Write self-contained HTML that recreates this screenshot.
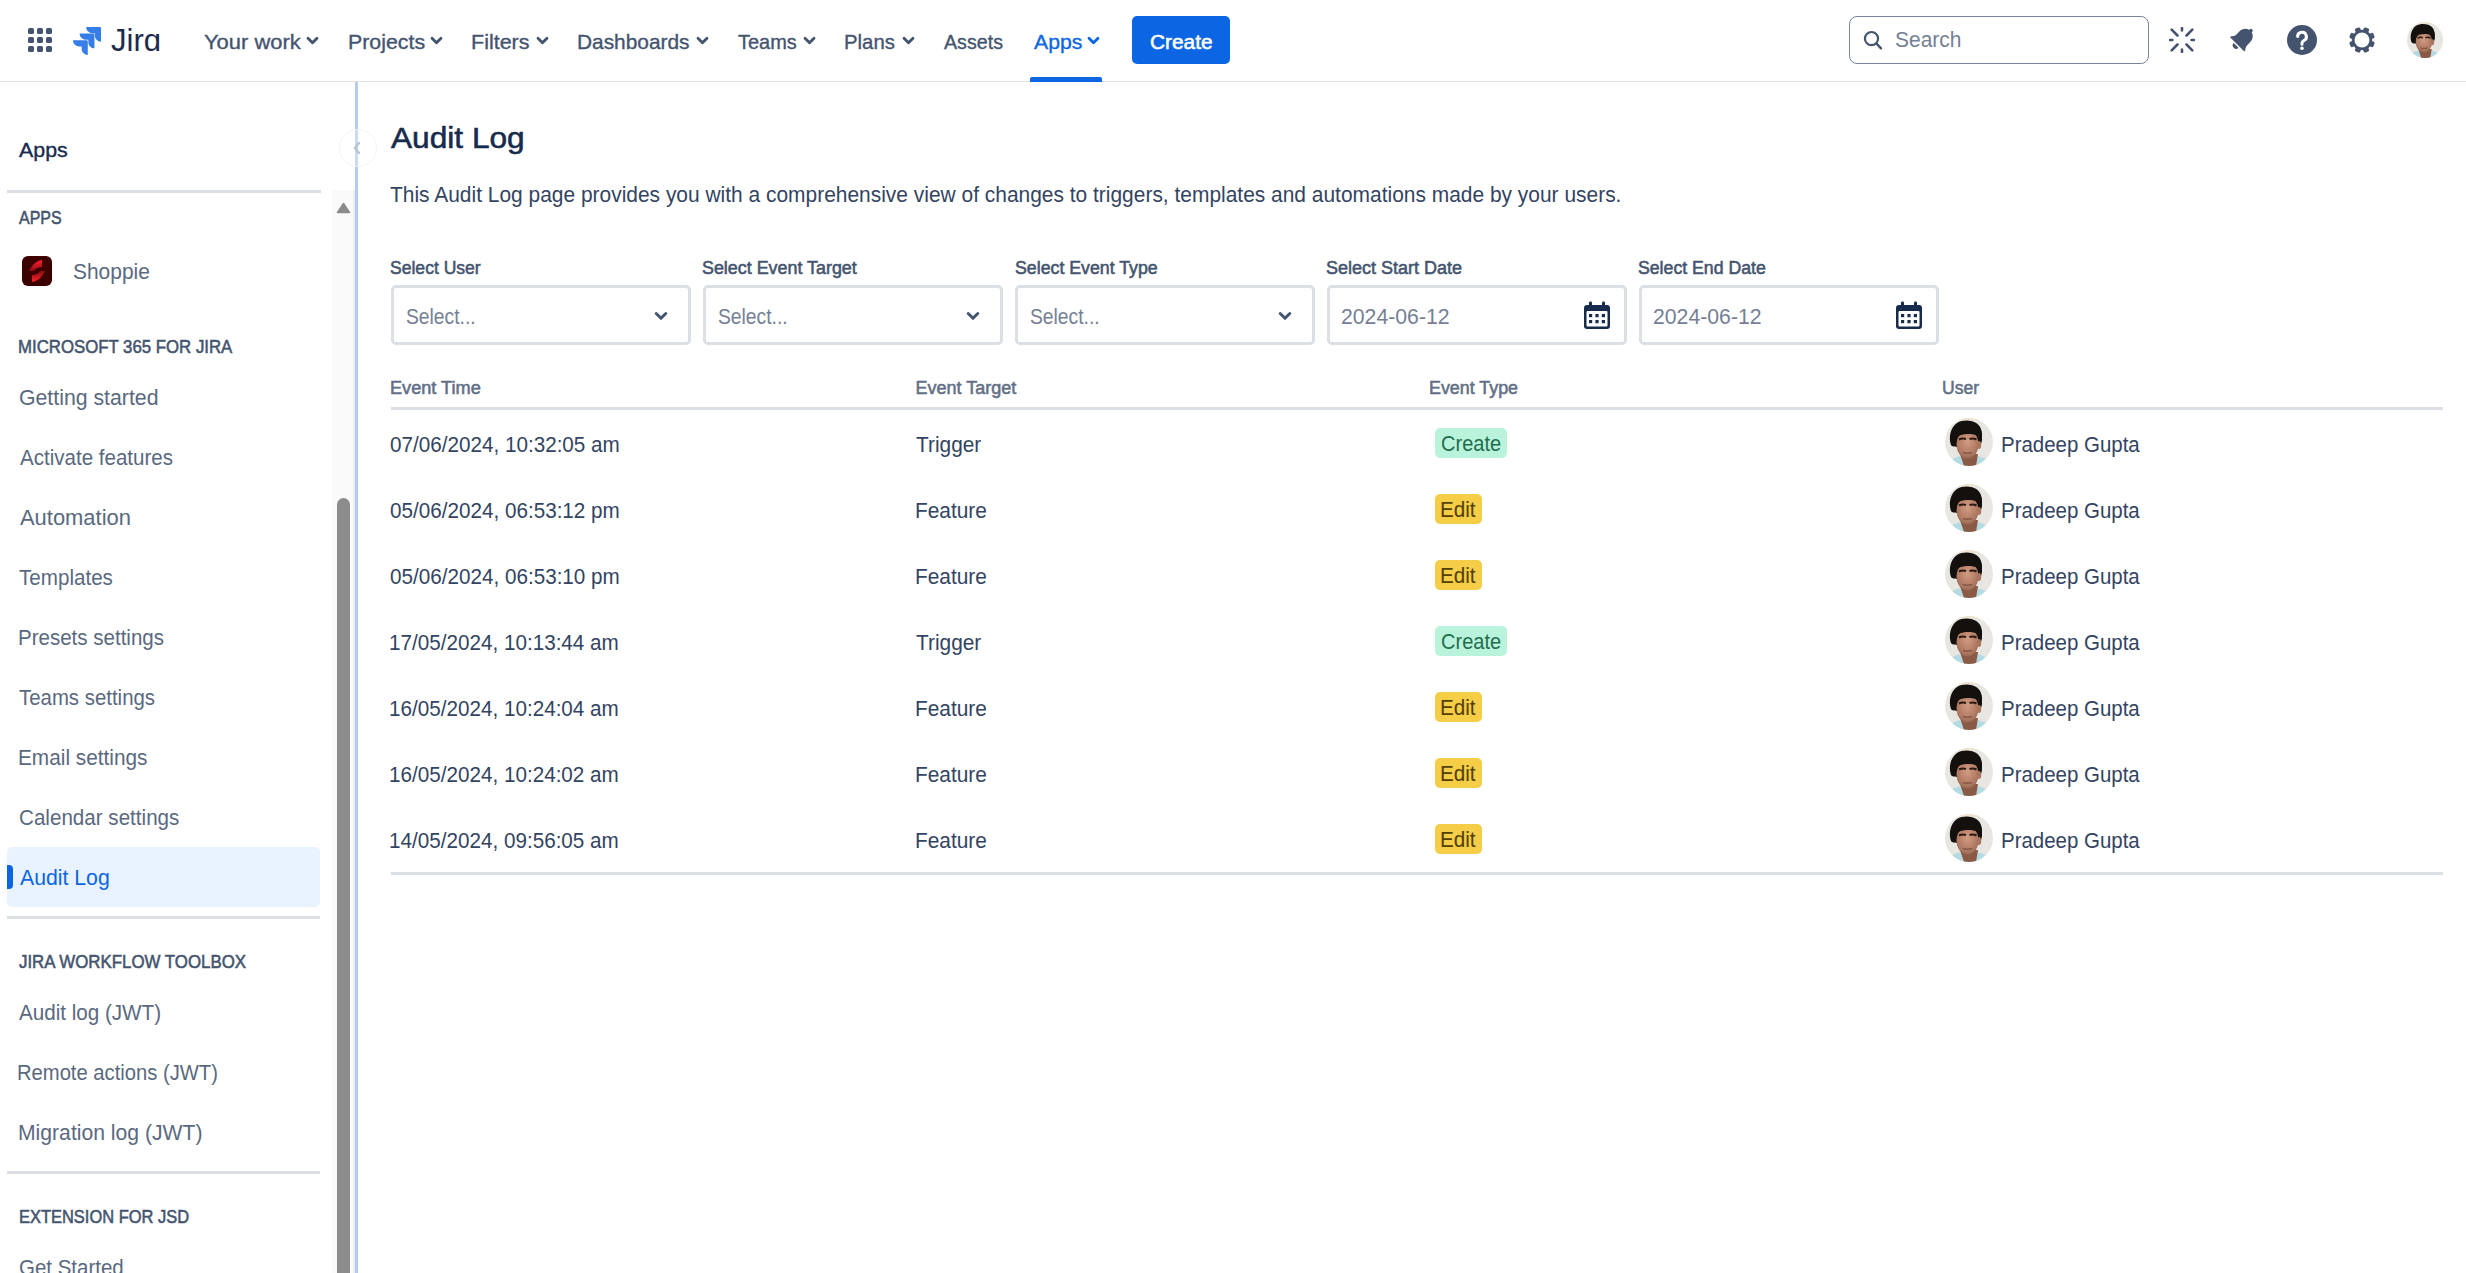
<!DOCTYPE html>
<html><head><meta charset="utf-8"><title>Audit Log</title><style>
*{box-sizing:border-box;margin:0;padding:0}
html,body{width:2466px;height:1273px;overflow:hidden;background:#fff;font-family:"Liberation Sans",sans-serif}
.abs{position:absolute;display:block}
.t{position:absolute;white-space:pre;transform-origin:0 0;font-family:"Liberation Sans",sans-serif}
.hr{position:absolute;background:#dcdfe4}
.sel{position:absolute;top:285px;width:300px;height:60px;border:3px solid #dcdfe4;border-radius:5px;background:#fff}
.badge{position:absolute;border-radius:5px}
</style></head><body>
<div class="abs" style="left:0;top:81px;width:2466px;height:1px;background:#dcdfe4"></div>
<div class="abs" style="left:28px;top:28px;width:6px;height:6px;border-radius:1.6px;background:#44546f"></div>
<div class="abs" style="left:37px;top:28px;width:6px;height:6px;border-radius:1.6px;background:#44546f"></div>
<div class="abs" style="left:46px;top:28px;width:6px;height:6px;border-radius:1.6px;background:#44546f"></div>
<div class="abs" style="left:28px;top:37px;width:6px;height:6px;border-radius:1.6px;background:#44546f"></div>
<div class="abs" style="left:37px;top:37px;width:6px;height:6px;border-radius:1.6px;background:#44546f"></div>
<div class="abs" style="left:46px;top:37px;width:6px;height:6px;border-radius:1.6px;background:#44546f"></div>
<div class="abs" style="left:28px;top:46px;width:6px;height:6px;border-radius:1.6px;background:#44546f"></div>
<div class="abs" style="left:37px;top:46px;width:6px;height:6px;border-radius:1.6px;background:#44546f"></div>
<div class="abs" style="left:46px;top:46px;width:6px;height:6px;border-radius:1.6px;background:#44546f"></div>
<svg class="abs" style="left:73px;top:27px" width="28" height="28" viewBox="2.1 3 26.5 26.4">
<path fill="#357de8" d="M27.3 3H14.6c0 3.2 2.6 5.8 5.8 5.8h2.4v2.3c0 3.2 2.6 5.8 5.8 5.8V4.1c0-.6-.5-1.1-1.3-1.1z"/>
<path fill="#357de8" d="M21.1 9.2H8.4c0 3.2 2.6 5.8 5.8 5.8h2.4v2.3c0 3.2 2.6 5.8 5.8 5.8V10.3c0-.6-.5-1.1-1.3-1.1z"/>
<path fill="#357de8" d="M14.8 15.5H2.1c0 3.2 2.6 5.8 5.8 5.8h2.4v2.3c0 3.2 2.6 5.8 5.8 5.8V16.6c0-.6-.5-1.1-1.3-1.1z"/>
</svg>
<span class="t" style="left:111px;top:24px;font-size:32px;line-height:32px;color:#1d2b4c;transform:scaleX(0.97)">Jir&#593;</span>
<svg class="abs" style="left:305.5px;top:36px" width="13" height="10" viewBox="0 0 13 10"><path d="M2 2.2 L6.5 6.8 L11 2.2" stroke="#44546f" stroke-width="2.8" fill="none" stroke-linecap="round" stroke-linejoin="round"/></svg>
<svg class="abs" style="left:430.0px;top:36px" width="13" height="10" viewBox="0 0 13 10"><path d="M2 2.2 L6.5 6.8 L11 2.2" stroke="#44546f" stroke-width="2.8" fill="none" stroke-linecap="round" stroke-linejoin="round"/></svg>
<svg class="abs" style="left:535.6px;top:36px" width="13" height="10" viewBox="0 0 13 10"><path d="M2 2.2 L6.5 6.8 L11 2.2" stroke="#44546f" stroke-width="2.8" fill="none" stroke-linecap="round" stroke-linejoin="round"/></svg>
<svg class="abs" style="left:696.0px;top:36px" width="13" height="10" viewBox="0 0 13 10"><path d="M2 2.2 L6.5 6.8 L11 2.2" stroke="#44546f" stroke-width="2.8" fill="none" stroke-linecap="round" stroke-linejoin="round"/></svg>
<svg class="abs" style="left:803.0px;top:36px" width="13" height="10" viewBox="0 0 13 10"><path d="M2 2.2 L6.5 6.8 L11 2.2" stroke="#44546f" stroke-width="2.8" fill="none" stroke-linecap="round" stroke-linejoin="round"/></svg>
<svg class="abs" style="left:902.0px;top:36px" width="13" height="10" viewBox="0 0 13 10"><path d="M2 2.2 L6.5 6.8 L11 2.2" stroke="#44546f" stroke-width="2.8" fill="none" stroke-linecap="round" stroke-linejoin="round"/></svg>
<svg class="abs" style="left:1087.0px;top:36px" width="13" height="10" viewBox="0 0 13 10"><path d="M2 2.2 L6.5 6.8 L11 2.2" stroke="#0c66e4" stroke-width="2.8" fill="none" stroke-linecap="round" stroke-linejoin="round"/></svg>
<div class="abs" style="left:1030px;top:77px;width:72px;height:5px;background:#0c66e4;border-radius:2px 2px 0 0"></div>
<div class="abs" style="left:1132px;top:16px;width:98px;height:48px;background:#0c66e4;border-radius:5px"></div>
<div class="abs" style="left:1849px;top:16px;width:300px;height:48px;border:1.5px solid #7a8599;border-radius:8px"></div>
<svg class="abs" style="left:1860px;top:28px" width="26" height="26" viewBox="0 0 26 26"><circle cx="11.5" cy="10.6" r="6.6" stroke="#44546f" stroke-width="2.2" fill="none"/><path d="M16.3 15.4 L21 20.3" stroke="#44546f" stroke-width="2.4" stroke-linecap="round"/></svg>
<svg class="abs" style="left:2169px;top:27px" width="26" height="26" viewBox="0 0 26 26"><path d="M22.60 13.00L25.00 13.00 M17.53 17.53L23.32 23.32 M13.00 22.60L13.00 25.00 M8.47 17.53L2.68 23.32 M3.40 13.00L1.00 13.00 M8.47 8.47L2.68 2.68 M13.00 3.40L13.00 1.00 M17.53 8.47L23.32 2.68" stroke="#44546f" stroke-width="2.6" stroke-linecap="round"/></svg>
<svg class="abs" style="left:2220px;top:20px" width="40" height="40" viewBox="0 0 40 40"><g transform="translate(17.2 24.4) rotate(45) translate(-14 -21.2)">
<path d="M14 2.4C9 2.4 6.4 6.3 6.4 10.6V15C6.4 16.9 5 18.9 3.9 19.9V21.2H24.1V19.9C23 18.9 21.6 16.9 21.6 15V10.6C21.6 6.3 19 2.4 14 2.4Z" fill="#44546f"/>
<circle cx="14" cy="1.9" r="1.9" fill="#44546f"/>
<path d="M10.6 22.7a3.4 3.4 0 0 0 6.8 0Z" fill="#44546f"/></g></svg>
<svg class="abs" style="left:2287px;top:25px" width="30" height="30" viewBox="0 0 30 30"><circle cx="15" cy="15" r="15" fill="#44546f"/>
<path d="M10.6 11.6a4.4 4.4 0 1 1 6.2 4c-1.2.6-1.8 1.3-1.8 2.6v1" stroke="#fff" stroke-width="3" fill="none" stroke-linecap="round"/>
<circle cx="15" cy="23.3" r="1.8" fill="#fff"/></svg>
<svg class="abs" style="left:2348.5px;top:26.5px" width="26" height="26" viewBox="0 0 26 26"><g fill="#44546f"><circle cx="13" cy="13" r="10.2"/><rect x="10.2" y="0.1" width="5.6" height="8" rx="1.4" transform="rotate(22.5 13 13)"/><rect x="10.2" y="0.1" width="5.6" height="8" rx="1.4" transform="rotate(67.5 13 13)"/><rect x="10.2" y="0.1" width="5.6" height="8" rx="1.4" transform="rotate(112.5 13 13)"/><rect x="10.2" y="0.1" width="5.6" height="8" rx="1.4" transform="rotate(157.5 13 13)"/><rect x="10.2" y="0.1" width="5.6" height="8" rx="1.4" transform="rotate(202.5 13 13)"/><rect x="10.2" y="0.1" width="5.6" height="8" rx="1.4" transform="rotate(247.5 13 13)"/><rect x="10.2" y="0.1" width="5.6" height="8" rx="1.4" transform="rotate(292.5 13 13)"/><rect x="10.2" y="0.1" width="5.6" height="8" rx="1.4" transform="rotate(337.5 13 13)"/></g><circle cx="13" cy="13" r="7.5" fill="#fff"/></svg>
<svg class="abs" style="left:2407px;top:22px" width="36" height="36" viewBox="0 0 48 48">
<defs><clipPath id="ac2407_22"><circle cx="24" cy="24" r="24"/></clipPath>
<radialGradient id="fac2407_22" cx="0.5" cy="0.4" r="0.65"><stop offset="0" stop-color="#cf9c82"/><stop offset="0.7" stop-color="#b17a62"/><stop offset="1" stop-color="#8f6350"/></radialGradient></defs>
<g clip-path="url(#ac2407_22)">
<rect width="48" height="48" fill="#e7e6e1"/>
<rect x="10" y="0" width="26" height="2.5" fill="#ece5cf"/>
<path d="M2 48 C4 42 10 39 16 38 L32 38 C38 39 44 42 46 48Z" fill="#b4dbe3"/>
<path d="M15 36 L19 48 L31 48 L33 36Z" fill="#8a5a45"/>
<path d="M7 24 C6 12 13 4 23 4 C32 4 37.5 10 37 20 C36.8 24 36 27 35 29 L11 29Z" fill="#14100e"/>
<ellipse cx="22.5" cy="26.5" rx="11" ry="14" fill="url(#fac2407_22)"/>
<ellipse cx="34" cy="27" rx="2.2" ry="4" fill="#a87560"/>
<path d="M6 27 C3.5 20 5 10 12 5 C18 1.5 27 2 32 5.5 C36.5 9 38 15 36.5 24 C35 21 33.5 18.5 31 17 C27 15.5 20 15.5 15.5 17 C12.5 18.5 11 22 11 28 C9 29 7 28.5 6 27Z" fill="#14100e"/>
<path d="M14 21.5 q3.5 -1.8 7 -0.5 M24.5 21 q3.5 -1.3 7 0.5" stroke="#2a1a12" stroke-width="2" fill="none"/>
<path d="M18 34.5 q4.5 1.5 9 0" stroke="#85574a" stroke-width="1.6" fill="none"/>
</g></svg>
<div class="hr" style="left:7px;top:190px;width:314px;height:3px"></div>
<div class="hr" style="left:7px;top:916px;width:313px;height:3px"></div>
<div class="hr" style="left:7px;top:1171px;width:313px;height:3px"></div>
<div class="abs" style="left:332px;top:190px;width:23px;height:1083px;background:#fafafa"></div>
<div class="abs" style="left:353px;top:190px;width:2px;height:1083px;background:#ececec"></div>
<svg class="abs" style="left:336px;top:202px" width="15" height="12" viewBox="0 0 15 12"><path d="M7.5 1.5 L13.5 10.5 H1.5Z" fill="#8b8b8b" stroke="#8b8b8b" stroke-width="1.5" stroke-linejoin="round"/></svg>
<div class="abs" style="left:337px;top:498px;width:13px;height:790px;background:#8c8c8c;border-radius:6.5px"></div>
<div class="abs" style="left:355px;top:82px;width:3px;height:1191px;background:#b6c9ee"></div>
<div class="abs" style="left:339px;top:129px;width:38px;height:38px;border-radius:50%;border:1px solid #f3f4f6;background:rgba(255,255,255,0.3)"></div>
<svg class="abs" style="left:351px;top:140px" width="12" height="16" viewBox="0 0 12 16"><path d="M8 3 L4 8 L8 13" stroke="#b9c3d3" stroke-width="2.4" fill="none" stroke-linecap="round"/></svg>
<svg class="abs" style="left:22px;top:256px" width="30" height="30" viewBox="0 0 30 30">
<defs><linearGradient id="sg1" x1="0" y1="0" x2="0" y2="1"><stop offset="0" stop-color="#ff2330"/><stop offset="1" stop-color="#8a0a10"/></linearGradient>
<linearGradient id="sg2" x1="0" y1="1" x2="0" y2="0"><stop offset="0" stop-color="#ff2330"/><stop offset="1" stop-color="#8a0a10"/></linearGradient></defs>
<rect x="0" y="0" width="30" height="30" rx="6" fill="#3d0000"/>
<path d="M20 4 C14 5 10 9 7 15 L12 15 C14 12 17 11 20 11Z" fill="url(#sg1)"/>
<path d="M10 26 C16 25 20 21 23 15 L18 15 C16 18 13 19 10 19Z" fill="url(#sg2)"/>
</svg>
<div class="abs" style="left:7px;top:847px;width:313px;height:60px;background:#e9f2ff;border-radius:5px"></div>
<div class="abs" style="left:7px;top:865px;width:6px;height:24px;background:#0c66e4;border-radius:0 4px 4px 0"></div>
<div class="sel" style="left:391px"></div>
<svg class="abs" style="left:654px;top:311px" width="14" height="11" viewBox="0 0 14 11"><path d="M2.2 2.5 L7 7.3 L11.8 2.5" stroke="#44546f" stroke-width="3" fill="none" stroke-linecap="round" stroke-linejoin="round"/></svg>
<div class="sel" style="left:703px"></div>
<svg class="abs" style="left:966px;top:311px" width="14" height="11" viewBox="0 0 14 11"><path d="M2.2 2.5 L7 7.3 L11.8 2.5" stroke="#44546f" stroke-width="3" fill="none" stroke-linecap="round" stroke-linejoin="round"/></svg>
<div class="sel" style="left:1015px"></div>
<svg class="abs" style="left:1278px;top:311px" width="14" height="11" viewBox="0 0 14 11"><path d="M2.2 2.5 L7 7.3 L11.8 2.5" stroke="#44546f" stroke-width="3" fill="none" stroke-linecap="round" stroke-linejoin="round"/></svg>
<div class="sel" style="left:1327px"></div>
<svg class="abs" style="left:1583px;top:301px" width="28" height="29" viewBox="0 0 28 29">
<rect x="1" y="4" width="26" height="24" rx="3" fill="#172b4d"/>
<rect x="3.5" y="10" width="21" height="15.5" rx="1" fill="#fff"/>
<rect x="6" y="0.5" width="3" height="6" rx="1.2" fill="#172b4d"/><rect x="19" y="0.5" width="3" height="6" rx="1.2" fill="#172b4d"/>
<g fill="#172b4d"><rect x="6" y="13" width="3.2" height="3.2"/><rect x="12.4" y="13" width="3.2" height="3.2"/><rect x="18.8" y="13" width="3.2" height="3.2"/>
<rect x="6" y="19" width="3.2" height="3.2"/><rect x="12.4" y="19" width="3.2" height="3.2"/><rect x="18.8" y="19" width="3.2" height="3.2"/></g>
</svg>
<div class="sel" style="left:1639px"></div>
<svg class="abs" style="left:1895px;top:301px" width="28" height="29" viewBox="0 0 28 29">
<rect x="1" y="4" width="26" height="24" rx="3" fill="#172b4d"/>
<rect x="3.5" y="10" width="21" height="15.5" rx="1" fill="#fff"/>
<rect x="6" y="0.5" width="3" height="6" rx="1.2" fill="#172b4d"/><rect x="19" y="0.5" width="3" height="6" rx="1.2" fill="#172b4d"/>
<g fill="#172b4d"><rect x="6" y="13" width="3.2" height="3.2"/><rect x="12.4" y="13" width="3.2" height="3.2"/><rect x="18.8" y="13" width="3.2" height="3.2"/>
<rect x="6" y="19" width="3.2" height="3.2"/><rect x="12.4" y="19" width="3.2" height="3.2"/><rect x="18.8" y="19" width="3.2" height="3.2"/></g>
</svg>
<div class="hr" style="left:391px;top:407px;width:2052px;height:3px"></div>
<div class="hr" style="left:391px;top:872px;width:2052px;height:3px"></div>
<div class="badge" style="left:1435px;top:428px;width:72px;height:30px;background:#baf3db"></div>
<svg class="abs" style="left:1945px;top:418px" width="48" height="48" viewBox="0 0 48 48">
<defs><clipPath id="ac1945_418"><circle cx="24" cy="24" r="24"/></clipPath>
<radialGradient id="fac1945_418" cx="0.5" cy="0.4" r="0.65"><stop offset="0" stop-color="#cf9c82"/><stop offset="0.7" stop-color="#b17a62"/><stop offset="1" stop-color="#8f6350"/></radialGradient></defs>
<g clip-path="url(#ac1945_418)">
<rect width="48" height="48" fill="#e7e6e1"/>
<rect x="10" y="0" width="26" height="2.5" fill="#ece5cf"/>
<path d="M2 48 C4 42 10 39 16 38 L32 38 C38 39 44 42 46 48Z" fill="#b4dbe3"/>
<path d="M15 36 L19 48 L31 48 L33 36Z" fill="#8a5a45"/>
<path d="M7 24 C6 12 13 4 23 4 C32 4 37.5 10 37 20 C36.8 24 36 27 35 29 L11 29Z" fill="#14100e"/>
<ellipse cx="22.5" cy="26.5" rx="11" ry="14" fill="url(#fac1945_418)"/>
<ellipse cx="34" cy="27" rx="2.2" ry="4" fill="#a87560"/>
<path d="M6 27 C3.5 20 5 10 12 5 C18 1.5 27 2 32 5.5 C36.5 9 38 15 36.5 24 C35 21 33.5 18.5 31 17 C27 15.5 20 15.5 15.5 17 C12.5 18.5 11 22 11 28 C9 29 7 28.5 6 27Z" fill="#14100e"/>
<path d="M14 21.5 q3.5 -1.8 7 -0.5 M24.5 21 q3.5 -1.3 7 0.5" stroke="#2a1a12" stroke-width="2" fill="none"/>
<path d="M18 34.5 q4.5 1.5 9 0" stroke="#85574a" stroke-width="1.6" fill="none"/>
</g></svg>
<div class="badge" style="left:1435px;top:494px;width:47px;height:30px;background:#f5cd47"></div>
<svg class="abs" style="left:1945px;top:484px" width="48" height="48" viewBox="0 0 48 48">
<defs><clipPath id="ac1945_484"><circle cx="24" cy="24" r="24"/></clipPath>
<radialGradient id="fac1945_484" cx="0.5" cy="0.4" r="0.65"><stop offset="0" stop-color="#cf9c82"/><stop offset="0.7" stop-color="#b17a62"/><stop offset="1" stop-color="#8f6350"/></radialGradient></defs>
<g clip-path="url(#ac1945_484)">
<rect width="48" height="48" fill="#e7e6e1"/>
<rect x="10" y="0" width="26" height="2.5" fill="#ece5cf"/>
<path d="M2 48 C4 42 10 39 16 38 L32 38 C38 39 44 42 46 48Z" fill="#b4dbe3"/>
<path d="M15 36 L19 48 L31 48 L33 36Z" fill="#8a5a45"/>
<path d="M7 24 C6 12 13 4 23 4 C32 4 37.5 10 37 20 C36.8 24 36 27 35 29 L11 29Z" fill="#14100e"/>
<ellipse cx="22.5" cy="26.5" rx="11" ry="14" fill="url(#fac1945_484)"/>
<ellipse cx="34" cy="27" rx="2.2" ry="4" fill="#a87560"/>
<path d="M6 27 C3.5 20 5 10 12 5 C18 1.5 27 2 32 5.5 C36.5 9 38 15 36.5 24 C35 21 33.5 18.5 31 17 C27 15.5 20 15.5 15.5 17 C12.5 18.5 11 22 11 28 C9 29 7 28.5 6 27Z" fill="#14100e"/>
<path d="M14 21.5 q3.5 -1.8 7 -0.5 M24.5 21 q3.5 -1.3 7 0.5" stroke="#2a1a12" stroke-width="2" fill="none"/>
<path d="M18 34.5 q4.5 1.5 9 0" stroke="#85574a" stroke-width="1.6" fill="none"/>
</g></svg>
<div class="badge" style="left:1435px;top:560px;width:47px;height:30px;background:#f5cd47"></div>
<svg class="abs" style="left:1945px;top:550px" width="48" height="48" viewBox="0 0 48 48">
<defs><clipPath id="ac1945_550"><circle cx="24" cy="24" r="24"/></clipPath>
<radialGradient id="fac1945_550" cx="0.5" cy="0.4" r="0.65"><stop offset="0" stop-color="#cf9c82"/><stop offset="0.7" stop-color="#b17a62"/><stop offset="1" stop-color="#8f6350"/></radialGradient></defs>
<g clip-path="url(#ac1945_550)">
<rect width="48" height="48" fill="#e7e6e1"/>
<rect x="10" y="0" width="26" height="2.5" fill="#ece5cf"/>
<path d="M2 48 C4 42 10 39 16 38 L32 38 C38 39 44 42 46 48Z" fill="#b4dbe3"/>
<path d="M15 36 L19 48 L31 48 L33 36Z" fill="#8a5a45"/>
<path d="M7 24 C6 12 13 4 23 4 C32 4 37.5 10 37 20 C36.8 24 36 27 35 29 L11 29Z" fill="#14100e"/>
<ellipse cx="22.5" cy="26.5" rx="11" ry="14" fill="url(#fac1945_550)"/>
<ellipse cx="34" cy="27" rx="2.2" ry="4" fill="#a87560"/>
<path d="M6 27 C3.5 20 5 10 12 5 C18 1.5 27 2 32 5.5 C36.5 9 38 15 36.5 24 C35 21 33.5 18.5 31 17 C27 15.5 20 15.5 15.5 17 C12.5 18.5 11 22 11 28 C9 29 7 28.5 6 27Z" fill="#14100e"/>
<path d="M14 21.5 q3.5 -1.8 7 -0.5 M24.5 21 q3.5 -1.3 7 0.5" stroke="#2a1a12" stroke-width="2" fill="none"/>
<path d="M18 34.5 q4.5 1.5 9 0" stroke="#85574a" stroke-width="1.6" fill="none"/>
</g></svg>
<div class="badge" style="left:1435px;top:626px;width:72px;height:30px;background:#baf3db"></div>
<svg class="abs" style="left:1945px;top:616px" width="48" height="48" viewBox="0 0 48 48">
<defs><clipPath id="ac1945_616"><circle cx="24" cy="24" r="24"/></clipPath>
<radialGradient id="fac1945_616" cx="0.5" cy="0.4" r="0.65"><stop offset="0" stop-color="#cf9c82"/><stop offset="0.7" stop-color="#b17a62"/><stop offset="1" stop-color="#8f6350"/></radialGradient></defs>
<g clip-path="url(#ac1945_616)">
<rect width="48" height="48" fill="#e7e6e1"/>
<rect x="10" y="0" width="26" height="2.5" fill="#ece5cf"/>
<path d="M2 48 C4 42 10 39 16 38 L32 38 C38 39 44 42 46 48Z" fill="#b4dbe3"/>
<path d="M15 36 L19 48 L31 48 L33 36Z" fill="#8a5a45"/>
<path d="M7 24 C6 12 13 4 23 4 C32 4 37.5 10 37 20 C36.8 24 36 27 35 29 L11 29Z" fill="#14100e"/>
<ellipse cx="22.5" cy="26.5" rx="11" ry="14" fill="url(#fac1945_616)"/>
<ellipse cx="34" cy="27" rx="2.2" ry="4" fill="#a87560"/>
<path d="M6 27 C3.5 20 5 10 12 5 C18 1.5 27 2 32 5.5 C36.5 9 38 15 36.5 24 C35 21 33.5 18.5 31 17 C27 15.5 20 15.5 15.5 17 C12.5 18.5 11 22 11 28 C9 29 7 28.5 6 27Z" fill="#14100e"/>
<path d="M14 21.5 q3.5 -1.8 7 -0.5 M24.5 21 q3.5 -1.3 7 0.5" stroke="#2a1a12" stroke-width="2" fill="none"/>
<path d="M18 34.5 q4.5 1.5 9 0" stroke="#85574a" stroke-width="1.6" fill="none"/>
</g></svg>
<div class="badge" style="left:1435px;top:692px;width:47px;height:30px;background:#f5cd47"></div>
<svg class="abs" style="left:1945px;top:682px" width="48" height="48" viewBox="0 0 48 48">
<defs><clipPath id="ac1945_682"><circle cx="24" cy="24" r="24"/></clipPath>
<radialGradient id="fac1945_682" cx="0.5" cy="0.4" r="0.65"><stop offset="0" stop-color="#cf9c82"/><stop offset="0.7" stop-color="#b17a62"/><stop offset="1" stop-color="#8f6350"/></radialGradient></defs>
<g clip-path="url(#ac1945_682)">
<rect width="48" height="48" fill="#e7e6e1"/>
<rect x="10" y="0" width="26" height="2.5" fill="#ece5cf"/>
<path d="M2 48 C4 42 10 39 16 38 L32 38 C38 39 44 42 46 48Z" fill="#b4dbe3"/>
<path d="M15 36 L19 48 L31 48 L33 36Z" fill="#8a5a45"/>
<path d="M7 24 C6 12 13 4 23 4 C32 4 37.5 10 37 20 C36.8 24 36 27 35 29 L11 29Z" fill="#14100e"/>
<ellipse cx="22.5" cy="26.5" rx="11" ry="14" fill="url(#fac1945_682)"/>
<ellipse cx="34" cy="27" rx="2.2" ry="4" fill="#a87560"/>
<path d="M6 27 C3.5 20 5 10 12 5 C18 1.5 27 2 32 5.5 C36.5 9 38 15 36.5 24 C35 21 33.5 18.5 31 17 C27 15.5 20 15.5 15.5 17 C12.5 18.5 11 22 11 28 C9 29 7 28.5 6 27Z" fill="#14100e"/>
<path d="M14 21.5 q3.5 -1.8 7 -0.5 M24.5 21 q3.5 -1.3 7 0.5" stroke="#2a1a12" stroke-width="2" fill="none"/>
<path d="M18 34.5 q4.5 1.5 9 0" stroke="#85574a" stroke-width="1.6" fill="none"/>
</g></svg>
<div class="badge" style="left:1435px;top:758px;width:47px;height:30px;background:#f5cd47"></div>
<svg class="abs" style="left:1945px;top:748px" width="48" height="48" viewBox="0 0 48 48">
<defs><clipPath id="ac1945_748"><circle cx="24" cy="24" r="24"/></clipPath>
<radialGradient id="fac1945_748" cx="0.5" cy="0.4" r="0.65"><stop offset="0" stop-color="#cf9c82"/><stop offset="0.7" stop-color="#b17a62"/><stop offset="1" stop-color="#8f6350"/></radialGradient></defs>
<g clip-path="url(#ac1945_748)">
<rect width="48" height="48" fill="#e7e6e1"/>
<rect x="10" y="0" width="26" height="2.5" fill="#ece5cf"/>
<path d="M2 48 C4 42 10 39 16 38 L32 38 C38 39 44 42 46 48Z" fill="#b4dbe3"/>
<path d="M15 36 L19 48 L31 48 L33 36Z" fill="#8a5a45"/>
<path d="M7 24 C6 12 13 4 23 4 C32 4 37.5 10 37 20 C36.8 24 36 27 35 29 L11 29Z" fill="#14100e"/>
<ellipse cx="22.5" cy="26.5" rx="11" ry="14" fill="url(#fac1945_748)"/>
<ellipse cx="34" cy="27" rx="2.2" ry="4" fill="#a87560"/>
<path d="M6 27 C3.5 20 5 10 12 5 C18 1.5 27 2 32 5.5 C36.5 9 38 15 36.5 24 C35 21 33.5 18.5 31 17 C27 15.5 20 15.5 15.5 17 C12.5 18.5 11 22 11 28 C9 29 7 28.5 6 27Z" fill="#14100e"/>
<path d="M14 21.5 q3.5 -1.8 7 -0.5 M24.5 21 q3.5 -1.3 7 0.5" stroke="#2a1a12" stroke-width="2" fill="none"/>
<path d="M18 34.5 q4.5 1.5 9 0" stroke="#85574a" stroke-width="1.6" fill="none"/>
</g></svg>
<div class="badge" style="left:1435px;top:824px;width:47px;height:30px;background:#f5cd47"></div>
<svg class="abs" style="left:1945px;top:814px" width="48" height="48" viewBox="0 0 48 48">
<defs><clipPath id="ac1945_814"><circle cx="24" cy="24" r="24"/></clipPath>
<radialGradient id="fac1945_814" cx="0.5" cy="0.4" r="0.65"><stop offset="0" stop-color="#cf9c82"/><stop offset="0.7" stop-color="#b17a62"/><stop offset="1" stop-color="#8f6350"/></radialGradient></defs>
<g clip-path="url(#ac1945_814)">
<rect width="48" height="48" fill="#e7e6e1"/>
<rect x="10" y="0" width="26" height="2.5" fill="#ece5cf"/>
<path d="M2 48 C4 42 10 39 16 38 L32 38 C38 39 44 42 46 48Z" fill="#b4dbe3"/>
<path d="M15 36 L19 48 L31 48 L33 36Z" fill="#8a5a45"/>
<path d="M7 24 C6 12 13 4 23 4 C32 4 37.5 10 37 20 C36.8 24 36 27 35 29 L11 29Z" fill="#14100e"/>
<ellipse cx="22.5" cy="26.5" rx="11" ry="14" fill="url(#fac1945_814)"/>
<ellipse cx="34" cy="27" rx="2.2" ry="4" fill="#a87560"/>
<path d="M6 27 C3.5 20 5 10 12 5 C18 1.5 27 2 32 5.5 C36.5 9 38 15 36.5 24 C35 21 33.5 18.5 31 17 C27 15.5 20 15.5 15.5 17 C12.5 18.5 11 22 11 28 C9 29 7 28.5 6 27Z" fill="#14100e"/>
<path d="M14 21.5 q3.5 -1.8 7 -0.5 M24.5 21 q3.5 -1.3 7 0.5" stroke="#2a1a12" stroke-width="2" fill="none"/>
<path d="M18 34.5 q4.5 1.5 9 0" stroke="#85574a" stroke-width="1.6" fill="none"/>
</g></svg>
<span class="t" style="left:204.0px;top:31.0px;font-size:21px;line-height:21px;color:#44546f;-webkit-text-stroke:0.35px #44546f;transform:scaleX(1.0440);">Your work</span>
<span class="t" style="left:347.5px;top:31.0px;font-size:21px;line-height:21px;color:#44546f;-webkit-text-stroke:0.35px #44546f;transform:scaleX(1.0164);">Projects</span>
<span class="t" style="left:470.7px;top:31.0px;font-size:21px;line-height:21px;color:#44546f;-webkit-text-stroke:0.35px #44546f;transform:scaleX(1.0236);">Filters</span>
<span class="t" style="left:576.7px;top:31.0px;font-size:21px;line-height:21px;color:#44546f;-webkit-text-stroke:0.35px #44546f;transform:scaleX(0.9937);">Dashboards</span>
<span class="t" style="left:738.0px;top:31.0px;font-size:21px;line-height:21px;color:#44546f;-webkit-text-stroke:0.35px #44546f;transform:scaleX(0.9508);">Teams</span>
<span class="t" style="left:843.7px;top:31.0px;font-size:21px;line-height:21px;color:#44546f;-webkit-text-stroke:0.35px #44546f;transform:scaleX(0.9680);">Plans</span>
<span class="t" style="left:944.0px;top:31.0px;font-size:21px;line-height:21px;color:#44546f;-webkit-text-stroke:0.35px #44546f;transform:scaleX(0.9355);">Assets</span>
<span class="t" style="left:1033.6px;top:31.0px;font-size:21px;line-height:21px;color:#0c66e4;-webkit-text-stroke:0.35px #0c66e4;transform:scaleX(1.0085);">Apps</span>
<span class="t" style="left:1150.0px;top:31.0px;font-size:21px;line-height:21px;color:#ffffff;-webkit-text-stroke:0.55px #ffffff;transform:scaleX(0.9918);">Create</span>
<span class="t" style="left:1895.0px;top:29.6px;font-size:21.5px;line-height:21.5px;color:#758095;transform:scaleX(0.9758);">Search</span>
<span class="t" style="left:19.3px;top:139.0px;font-size:21px;line-height:21px;color:#172b4d;-webkit-text-stroke:0.35px #172b4d;transform:scaleX(1.0191);">Apps</span>
<span class="t" style="left:19.3px;top:208.6px;font-size:18px;line-height:18px;color:#44546f;-webkit-text-stroke:0.55px #44546f;transform:scaleX(0.8854);">APPS</span>
<span class="t" style="left:72.5px;top:261.6px;font-size:21.5px;line-height:21.5px;color:#5a6980;transform:scaleX(0.9740);">Shoppie</span>
<span class="t" style="left:18.4px;top:337.6px;font-size:18px;line-height:18px;color:#44546f;-webkit-text-stroke:0.55px #44546f;transform:scaleX(0.9328);">MICROSOFT 365 FOR JIRA</span>
<span class="t" style="left:18.5px;top:387.6px;font-size:21.5px;line-height:21.5px;color:#5a6980;transform:scaleX(0.9892);">Getting started</span>
<span class="t" style="left:19.5px;top:447.6px;font-size:21.5px;line-height:21.5px;color:#5a6980;transform:scaleX(0.9556);">Activate features</span>
<span class="t" style="left:19.5px;top:507.6px;font-size:21.5px;line-height:21.5px;color:#5a6980;transform:scaleX(1.0196);">Automation</span>
<span class="t" style="left:18.5px;top:567.6px;font-size:21.5px;line-height:21.5px;color:#5a6980;transform:scaleX(0.9583);">Templates</span>
<span class="t" style="left:17.6px;top:627.6px;font-size:21.5px;line-height:21.5px;color:#5a6980;transform:scaleX(0.9547);">Presets settings</span>
<span class="t" style="left:18.6px;top:687.6px;font-size:21.5px;line-height:21.5px;color:#5a6980;transform:scaleX(0.9486);">Teams settings</span>
<span class="t" style="left:17.6px;top:747.6px;font-size:21.5px;line-height:21.5px;color:#5a6980;transform:scaleX(0.9672);">Email settings</span>
<span class="t" style="left:18.5px;top:807.6px;font-size:21.5px;line-height:21.5px;color:#5a6980;transform:scaleX(0.9584);">Calendar settings</span>
<span class="t" style="left:19.5px;top:867.6px;font-size:21.5px;line-height:21.5px;color:#0c66e4;transform:scaleX(0.9878);">Audit Log</span>
<span class="t" style="left:19.3px;top:952.6px;font-size:18px;line-height:18px;color:#44546f;-webkit-text-stroke:0.55px #44546f;transform:scaleX(0.9368);">JIRA WORKFLOW TOOLBOX</span>
<span class="t" style="left:19.3px;top:1002.6px;font-size:21.5px;line-height:21.5px;color:#5a6980;transform:scaleX(0.9585);">Audit log (JWT)</span>
<span class="t" style="left:17.4px;top:1062.6px;font-size:21.5px;line-height:21.5px;color:#5a6980;transform:scaleX(0.9393);">Remote actions (JWT)</span>
<span class="t" style="left:18.0px;top:1122.6px;font-size:21.5px;line-height:21.5px;color:#5a6980;transform:scaleX(0.9837);">Migration log (JWT)</span>
<span class="t" style="left:18.6px;top:1207.6px;font-size:18px;line-height:18px;color:#44546f;-webkit-text-stroke:0.55px #44546f;transform:scaleX(0.9141);">EXTENSION FOR JSD</span>
<span class="t" style="left:18.5px;top:1257.6px;font-size:21.5px;line-height:21.5px;color:#5a6980;transform:scaleX(0.9519);">Get Started</span>
<span class="t" style="left:391.0px;top:124.1px;font-size:29px;line-height:29px;color:#172b4d;-webkit-text-stroke:0.55px #172b4d;transform:scaleX(1.0909);">Audit Log</span>
<span class="t" style="left:390.0px;top:184.6px;font-size:21.5px;line-height:21.5px;color:#334462;transform:scaleX(0.9739);">This Audit Log page provides you with a comprehensive view of changes to triggers, templates and automations made by your users.</span>
<span class="t" style="left:390.0px;top:258.6px;font-size:18px;line-height:18px;color:#44546f;-webkit-text-stroke:0.55px #44546f;transform:scaleX(0.9750);">Select User</span>
<span class="t" style="left:702.0px;top:258.6px;font-size:18px;line-height:18px;color:#44546f;-webkit-text-stroke:0.55px #44546f;transform:scaleX(0.9935);">Select Event Target</span>
<span class="t" style="left:1014.6px;top:258.6px;font-size:18px;line-height:18px;color:#44546f;-webkit-text-stroke:0.55px #44546f;transform:scaleX(0.9860);">Select Event Type</span>
<span class="t" style="left:1326.0px;top:258.6px;font-size:18px;line-height:18px;color:#44546f;-webkit-text-stroke:0.55px #44546f;">Select Start Date</span>
<span class="t" style="left:1638.0px;top:258.6px;font-size:18px;line-height:18px;color:#44546f;-webkit-text-stroke:0.55px #44546f;transform:scaleX(0.9822);">Select End Date</span>
<span class="t" style="left:405.8px;top:306.6px;font-size:21.5px;line-height:21.5px;color:#758095;transform:scaleX(0.8960);">Select...</span>
<span class="t" style="left:717.8px;top:306.6px;font-size:21.5px;line-height:21.5px;color:#758095;transform:scaleX(0.8960);">Select...</span>
<span class="t" style="left:1029.8px;top:306.6px;font-size:21.5px;line-height:21.5px;color:#758095;transform:scaleX(0.8960);">Select...</span>
<span class="t" style="left:1341.0px;top:306.6px;font-size:21.5px;line-height:21.5px;color:#758095;transform:scaleX(0.9870);">2024-06-12</span>
<span class="t" style="left:1653.0px;top:306.6px;font-size:21.5px;line-height:21.5px;color:#758095;transform:scaleX(0.9870);">2024-06-12</span>
<span class="t" style="left:390.0px;top:379.1px;font-size:18px;line-height:18px;color:#626f86;-webkit-text-stroke:0.55px #626f86;transform:scaleX(1.0079);">Event Time</span>
<span class="t" style="left:915.6px;top:379.1px;font-size:18px;line-height:18px;color:#626f86;-webkit-text-stroke:0.55px #626f86;">Event Target</span>
<span class="t" style="left:1428.7px;top:379.1px;font-size:18px;line-height:18px;color:#626f86;-webkit-text-stroke:0.55px #626f86;transform:scaleX(0.9920);">Event Type</span>
<span class="t" style="left:1941.6px;top:379.1px;font-size:18px;line-height:18px;color:#626f86;-webkit-text-stroke:0.55px #626f86;transform:scaleX(0.9757);">User</span>
<span class="t" style="left:390.0px;top:434.6px;font-size:21.5px;line-height:21.5px;color:#334462;transform:scaleX(0.9612);">07/06/2024, 10:32:05 am</span>
<span class="t" style="left:915.6px;top:434.6px;font-size:21.5px;line-height:21.5px;color:#334462;transform:scaleX(0.9697);">Trigger</span>
<span class="t" style="left:1440.8px;top:433.6px;font-size:21.5px;line-height:21.5px;color:#216e4e;transform:scaleX(0.9317);">Create</span>
<span class="t" style="left:2001.1px;top:434.6px;font-size:21.5px;line-height:21.5px;color:#334462;transform:scaleX(0.9514);">Pradeep Gupta</span>
<span class="t" style="left:390.0px;top:500.6px;font-size:21.5px;line-height:21.5px;color:#334462;transform:scaleX(0.9612);">05/06/2024, 06:53:12 pm</span>
<span class="t" style="left:914.7px;top:500.6px;font-size:21.5px;line-height:21.5px;color:#334462;transform:scaleX(0.9697);">Feature</span>
<span class="t" style="left:1440.1px;top:499.6px;font-size:21.5px;line-height:21.5px;color:#533f04;transform:scaleX(0.9600);">Edit</span>
<span class="t" style="left:2001.1px;top:500.6px;font-size:21.5px;line-height:21.5px;color:#334462;transform:scaleX(0.9514);">Pradeep Gupta</span>
<span class="t" style="left:390.0px;top:566.6px;font-size:21.5px;line-height:21.5px;color:#334462;transform:scaleX(0.9612);">05/06/2024, 06:53:10 pm</span>
<span class="t" style="left:914.7px;top:566.6px;font-size:21.5px;line-height:21.5px;color:#334462;transform:scaleX(0.9697);">Feature</span>
<span class="t" style="left:1440.1px;top:565.6px;font-size:21.5px;line-height:21.5px;color:#533f04;transform:scaleX(0.9600);">Edit</span>
<span class="t" style="left:2001.1px;top:566.6px;font-size:21.5px;line-height:21.5px;color:#334462;transform:scaleX(0.9514);">Pradeep Gupta</span>
<span class="t" style="left:389.1px;top:632.6px;font-size:21.5px;line-height:21.5px;color:#334462;transform:scaleX(0.9612);">17/05/2024, 10:13:44 am</span>
<span class="t" style="left:915.6px;top:632.6px;font-size:21.5px;line-height:21.5px;color:#334462;transform:scaleX(0.9697);">Trigger</span>
<span class="t" style="left:1440.8px;top:631.6px;font-size:21.5px;line-height:21.5px;color:#216e4e;transform:scaleX(0.9317);">Create</span>
<span class="t" style="left:2001.1px;top:632.6px;font-size:21.5px;line-height:21.5px;color:#334462;transform:scaleX(0.9514);">Pradeep Gupta</span>
<span class="t" style="left:389.1px;top:698.6px;font-size:21.5px;line-height:21.5px;color:#334462;transform:scaleX(0.9612);">16/05/2024, 10:24:04 am</span>
<span class="t" style="left:914.7px;top:698.6px;font-size:21.5px;line-height:21.5px;color:#334462;transform:scaleX(0.9697);">Feature</span>
<span class="t" style="left:1440.1px;top:697.6px;font-size:21.5px;line-height:21.5px;color:#533f04;transform:scaleX(0.9600);">Edit</span>
<span class="t" style="left:2001.1px;top:698.6px;font-size:21.5px;line-height:21.5px;color:#334462;transform:scaleX(0.9514);">Pradeep Gupta</span>
<span class="t" style="left:389.1px;top:764.6px;font-size:21.5px;line-height:21.5px;color:#334462;transform:scaleX(0.9612);">16/05/2024, 10:24:02 am</span>
<span class="t" style="left:914.7px;top:764.6px;font-size:21.5px;line-height:21.5px;color:#334462;transform:scaleX(0.9697);">Feature</span>
<span class="t" style="left:1440.1px;top:763.6px;font-size:21.5px;line-height:21.5px;color:#533f04;transform:scaleX(0.9600);">Edit</span>
<span class="t" style="left:2001.1px;top:764.6px;font-size:21.5px;line-height:21.5px;color:#334462;transform:scaleX(0.9514);">Pradeep Gupta</span>
<span class="t" style="left:389.1px;top:830.6px;font-size:21.5px;line-height:21.5px;color:#334462;transform:scaleX(0.9612);">14/05/2024, 09:56:05 am</span>
<span class="t" style="left:914.7px;top:830.6px;font-size:21.5px;line-height:21.5px;color:#334462;transform:scaleX(0.9697);">Feature</span>
<span class="t" style="left:1440.1px;top:829.6px;font-size:21.5px;line-height:21.5px;color:#533f04;transform:scaleX(0.9600);">Edit</span>
<span class="t" style="left:2001.1px;top:830.6px;font-size:21.5px;line-height:21.5px;color:#334462;transform:scaleX(0.9514);">Pradeep Gupta</span>
</body></html>
